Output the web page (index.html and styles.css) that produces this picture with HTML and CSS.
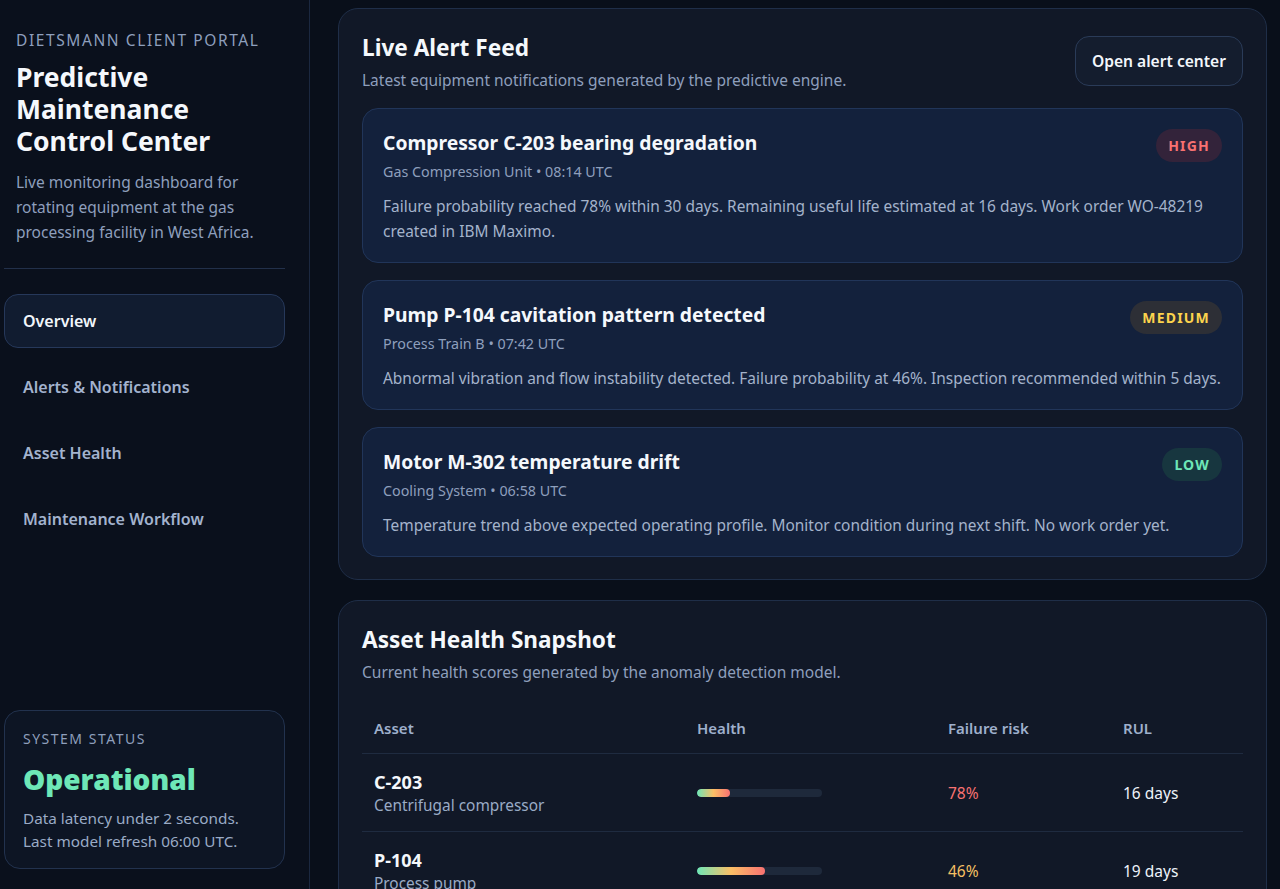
FILE: index.html
```html
<!DOCTYPE html>
<html lang="en">
<head>
<meta charset="utf-8">
<title>Dietsmann Client Portal</title>
<link rel="stylesheet" href="styles.css">
</head>
<body>
<div class="app">
  <aside class="sidebar">
    <div class="brand">
      <div class="eyebrow">Dietsmann Client Portal</div>
      <h1 class="brand-title">Predictive Maintenance Control Center</h1>
      <p class="brand-desc">Live monitoring dashboard for rotating equipment at the gas processing facility in West Africa.</p>
    </div>
    <nav class="nav">
      <a class="nav-item active">Overview</a>
      <a class="nav-item">Alerts &amp; Notifications</a>
      <a class="nav-item">Asset Health</a>
      <a class="nav-item">Maintenance Workflow</a>
    </nav>
    <div class="status-card">
      <div class="status-label">System Status</div>
      <div class="status-value">Operational</div>
      <p class="status-text">Data latency under 2 seconds.<br>Last model refresh 06:00 UTC.</p>
    </div>
  </aside>
  <main class="main">
    <section class="panel">
      <div class="panel-head">
        <div>
          <h2 class="panel-title">Live Alert Feed</h2>
          <p class="panel-sub">Latest equipment notifications generated by the predictive engine.</p>
        </div>
        <button class="btn">Open alert center</button>
      </div>
      <div class="alerts">
        <article class="alert">
          <div class="alert-head">
            <div>
              <h3 class="alert-title">Compressor C-203 bearing degradation</h3>
              <div class="alert-meta">Gas Compression Unit • 08:14 UTC</div>
            </div>
            <span class="badge badge-high">HIGH</span>
          </div>
          <p class="alert-body">Failure probability reached 78% within 30 days. Remaining useful life estimated at 16 days. Work order WO-48219 created in IBM Maximo.</p>
        </article>
        <article class="alert">
          <div class="alert-head">
            <div>
              <h3 class="alert-title">Pump P-104 cavitation pattern detected</h3>
              <div class="alert-meta">Process Train B • 07:42 UTC</div>
            </div>
            <span class="badge badge-medium">MEDIUM</span>
          </div>
          <p class="alert-body">Abnormal vibration and flow instability detected. Failure probability at 46%. Inspection recommended within 5 days.</p>
        </article>
        <article class="alert">
          <div class="alert-head">
            <div>
              <h3 class="alert-title">Motor M-302 temperature drift</h3>
              <div class="alert-meta">Cooling System • 06:58 UTC</div>
            </div>
            <span class="badge badge-low">LOW</span>
          </div>
          <p class="alert-body">Temperature trend above expected operating profile. Monitor condition during next shift. No work order yet.</p>
        </article>
      </div>
    </section>
    <section class="panel">
      <div class="panel-head">
        <div>
          <h2 class="panel-title">Asset Health Snapshot</h2>
          <p class="panel-sub">Current health scores generated by the anomaly detection model.</p>
        </div>
      </div>
      <table class="table">
        <thead>
          <tr>
            <th class="col-asset">Asset</th>
            <th class="col-health">Health</th>
            <th class="col-risk">Failure risk</th>
            <th class="col-rul">RUL</th>
          </tr>
        </thead>
        <tbody>
          <tr>
            <td><div class="asset-name">C-203</div><div class="asset-type">Centrifugal compressor</div></td>
            <td><div class="bar"><div class="bar-fill" style="width:26%"></div></div></td>
            <td class="risk risk-high">78%</td>
            <td class="rul">16 days</td>
          </tr>
          <tr>
            <td><div class="asset-name">P-104</div><div class="asset-type">Process pump</div></td>
            <td><div class="bar"><div class="bar-fill" style="width:54%"></div></div></td>
            <td class="risk risk-med">46%</td>
            <td class="rul">19 days</td>
          </tr>
        </tbody>
      </table>
    </section>
  </main>
</div>
</body>
</html>
```

FILE: styles.css
```css
* { box-sizing: border-box; }
html, body { margin: 0; padding: 0; height: 100%; }
body {
  background: #080d17;
  color: #e8eef8;
  font-family: "Noto Sans", "Open Sans", "DejaVu Sans", sans-serif;
  overflow: hidden;
}
.app { display: flex; height: 889px; }

.sidebar {
  width: 310px;
  flex: 0 0 310px;
  background: #0a101c;
  border-right: 1px solid #1b2840;
  padding: 0 24px 20px 4px;
  display: flex;
  flex-direction: column;
}
.brand {
  padding: 30px 0 23px 12px;
  border-bottom: 1px solid #22304a;
}
.eyebrow {
  font-size: 15.5px;
  line-height: 20px;
  letter-spacing: 1.6px;
  text-transform: uppercase;
  color: #8e9fbc;
}
.brand-title {
  margin: 11px 0 0;
  font-size: 26.5px;
  line-height: 32px;
  font-weight: 700;
  color: #f5f8fc;
}
.brand-desc {
  margin: 13px 0 0;
  font-size: 15.5px;
  line-height: 25px;
  color: #8e9fbc;
}
.nav {
  display: flex;
  flex-direction: column;
  gap: 12px;
  margin-top: 25px;
}
.nav-item {
  display: flex;
  align-items: center;
  height: 54px;
  padding: 0 18px;
  border: 1px solid transparent;
  border-radius: 14px;
  font-size: 16px;
  font-weight: 600;
  color: #a3b3ce;
}
.nav-item.active {
  background: #111c30;
  border-color: #26385a;
  color: #f2f6fb;
}
.status-card {
  margin-top: auto;
  height: 159px;
  padding: 18px 18px;
  border: 1px solid #22324e;
  border-radius: 16px;
  background: #0d1524;
}
.status-label {
  font-size: 14px;
  line-height: 20px;
  letter-spacing: 1.5px;
  text-transform: uppercase;
  color: #8e9fbc;
}
.status-value {
  margin-top: 12px;
  font-size: 28px;
  line-height: 36px;
  font-weight: 900;
  color: #6ee7b7;
}
.status-text {
  margin: 10px 0 0;
  font-size: 15.3px;
  line-height: 23px;
  color: #9aabc6;
}

.main {
  flex: 1;
  padding: 8px 13px 0 28px;
  display: flex;
  flex-direction: column;
  gap: 20px;
  background: #090f1a;
}
.panel {
  background: #111827;
  border: 1px solid #1f2e48;
  border-radius: 20px;
  padding: 24px 23px 22px;
  flex-shrink: 0;
}
.panel-head {
  display: flex;
  justify-content: space-between;
  align-items: flex-start;
}
.panel-title {
  margin: 0;
  font-size: 22.6px;
  line-height: 30px;
  font-weight: 700;
  color: #f5f8fc;
}
.panel-sub {
  margin: 6px 0 0;
  font-size: 15.5px;
  line-height: 22px;
  color: #8e9fbc;
}
.btn {
  margin-top: 3px;
  height: 50px;
  padding: 0 16px;
  border: 1px solid #2a3b58;
  border-radius: 14px;
  background: #141d2e;
  color: #f2f6fb;
  font-family: inherit;
  font-size: 15.6px;
  font-weight: 600;
}
.alerts {
  margin-top: 17px;
  display: flex;
  flex-direction: column;
  gap: 17px;
}
.alert {
  background: #13213c;
  border: 1px solid #213559;
  border-radius: 16px;
  padding: 20px 20px 18px;
}
.alert-head {
  display: flex;
  justify-content: space-between;
  align-items: flex-start;
}
.alert-title {
  margin: 0;
  font-size: 19.3px;
  line-height: 28px;
  font-weight: 700;
  color: #f5f8fc;
}
.alert-meta {
  margin-top: 5px;
  font-size: 14.3px;
  line-height: 20px;
  color: #8e9fbc;
}
.alert-body {
  margin: 12px 0 0;
  font-size: 15.45px;
  line-height: 25px;
  color: #a4b3cb;
}
.badge {
  display: inline-flex;
  align-items: center;
  height: 33px;
  padding: 0 12px;
  border-radius: 17px;
  font-size: 14px;
  font-weight: 700;
  letter-spacing: 1.2px;
}
.badge-high { color: #f87171; background: #33233a; }
.badge-medium { color: #fcd34d; background: #2d2f36; }
.badge-low { color: #6ee7b7; background: #17363f; }

.table {
  margin-top: 20px;
  width: 100%;
  border-collapse: collapse;
}
.table th {
  text-align: left;
  height: 50px;
  padding: 0 12px;
  font-size: 15px;
  font-weight: 600;
  color: #9fb0cc;
  border-bottom: 1px solid #1f2b40;
}
.col-asset { width: 323px; }
.col-health { width: 251px; }
.col-risk { width: 175px; }
.table td {
  padding: 16px 12px 14px;
  border-bottom: 1px solid #1f2b40;
  vertical-align: middle;
  font-size: 15.5px;
}
.asset-name {
  font-size: 18px;
  line-height: 24px;
  font-weight: 700;
  color: #f5f8fc;
}
.asset-type {
  font-size: 15.4px;
  line-height: 23px;
  color: #9aabc6;
}
.bar {
  width: 125px;
  height: 8px;
  border-radius: 4px;
  background: #1e293b;
  overflow: hidden;
}
.bar-fill {
  height: 100%;
  border-radius: 4px;
  background: linear-gradient(90deg, #6ee7b7, #fbbf66 50%, #f87171);
}
.risk-high { color: #f87171; }
.risk-med { color: #f5c064; }
.rul { color: #eef3fa; }
```
